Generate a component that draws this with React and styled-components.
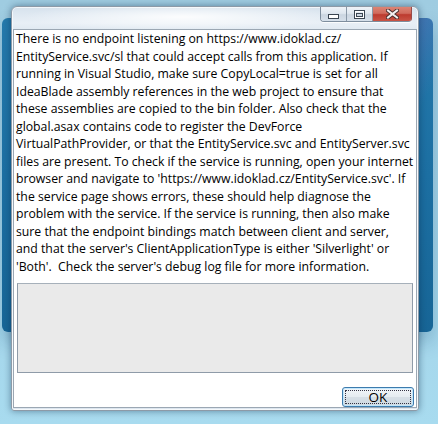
import React from "react";
import styled, { createGlobalStyle } from "styled-components";

const GlobalStyle = createGlobalStyle`
    body {
        margin: 0;
        overflow: hidden;
        font-family: "Open Sans", "Noto Sans", sans-serif;
    }
`;

const Desktop = styled.div`
    position: relative;
    width: 438px;
    height: 424px;
    box-sizing: border-box;
    padding: 6px 0 0 11px;
    background: linear-gradient(180deg, #9fcce1 0%, #a3d3e8 60%, #a8dbef 100%);
    overflow: hidden;
    &::before {
        content: "";
        position: absolute;
        left: 2px;
        top: 18px;
        width: 431px;
        height: 314px;
        border-radius: 6px;
        background:
            linear-gradient(118deg, transparent 62%, rgba(120, 110, 190, 0.35) 70%, transparent 78%),
            linear-gradient(180deg, #2479ab 0%, #1c6fa2 50%, #176596 100%);
        box-shadow: 0 10px 18px rgba(20, 70, 110, 0.25);
    }
`;

const Window = styled.div`
    position: relative;
    width: 408px;
    height: 405px;
    box-sizing: border-box;
    border: 1px solid #8d9aa7;
    border-radius: 6px 6px 3px 3px;
    background:
        radial-gradient(ellipse 160px 14px at 170px 10px, rgba(255, 255, 255, 0.9), transparent),
        linear-gradient(180deg, #d6e2ed 0px, #e8eff6 16px, #e0e9f1 23px, #dde6ef 100%);
    box-shadow: 0 0 7px rgba(0, 30, 60, 0.45), inset 0 0 0 1px rgba(255, 255, 255, 0.7);
    display: flex;
    flex-direction: column;
    padding: 0 1px 2px 1px;
`;

const TitleBar = styled.div`
    height: 22px;
    flex: none;
    display: flex;
    justify-content: flex-end;
    align-items: flex-start;
    padding-right: 5px;
`;

const CaptionGroup = styled.div`
    flex: none;
    display: flex;
    height: 14px;
    border-left: 1px solid #7e8e9e;
    border-right: 1px solid #9a4a48;
    border-bottom: 1px solid #7e8e9e;
    border-radius: 0 0 4px 4px;
    overflow: hidden;
    box-shadow: 0 1px 0 rgba(255, 255, 255, 0.8);
`;

const GlassButton = styled.div`
    flex: 0 0 25px;
    width: 25px;
    height: 14px;
    display: flex;
    align-items: center;
    justify-content: center;
    border-right: 1px solid #8a99a8;
    background-color: #dbe4ec;
    background-image: linear-gradient(180deg, #eef3f8 0%, #dfe7ef 45%, #cbd6e1 55%, #d6e0ea 100%);
`;

const CloseButton = styled.div`
    flex: 0 0 38px;
    width: 38px;
    height: 14px;
    display: flex;
    align-items: center;
    justify-content: center;
    background-color: #c4463a;
    background-image: linear-gradient(180deg, #dc8474 0%, #d06a5c 45%, #bd3b2f 55%, #c95446 100%);
`;

const Content = styled.div`
    flex: 1;
    background: #ffffff;
    border: 1px solid #9ba7b3;
    display: flex;
    flex-direction: column;
`;

const Message = styled.div`
    white-space: pre;
    font-size: 12.25px;
    line-height: 17.5px;
    color: #000000;
    padding: 0 0 0 2px;
    height: 245px;
`;

const DetailBox = styled.div`
    margin: 8px 3px 0 3px;
    height: 90px;
    box-sizing: border-box;
    border: 1px solid #8f9ba8;
    border-top-color: #a6b0ba;
    background: #eaeaea;
`;

const OkButton = styled.button`
    align-self: flex-end;
    margin: 14px 2px 0 0;
    width: 72px;
    height: 20px;
    box-sizing: border-box;
    border: 1px solid #3d7bad;
    border-radius: 3px;
    background: linear-gradient(180deg, #f2f6f9 0%, #e5ecf1 50%, #d6dfe6 51%, #cfd9e1 100%);
    box-shadow: inset 0 0 0 1px rgba(190, 230, 253, 0.9);
    font-family: "Open Sans", "Noto Sans", sans-serif;
    font-size: 13.5px;
    line-height: 18px;
    color: #000000;
    padding: 0;
    position: relative;
    &::after {
        content: "";
        position: absolute;
        inset: 2px;
        border: 1px dotted #334;
    }
`;

const MESSAGE = [
    "There is no endpoint listening on https://www.idoklad.cz/",
    "EntityService.svc/sl that could accept calls from this application. If",
    "running in Visual Studio, make sure CopyLocal=true is set for all",
    "IdeaBlade assembly references in the web project to ensure that",
    "these assemblies are copied to the bin folder. Also check that the",
    "global.asax contains code to register the DevForce",
    "VirtualPathProvider, or that the EntityService.svc and EntityServer.svc",
    "files are present. To check if the service is running, open your internet",
    "browser and navigate to 'https://www.idoklad.cz/EntityService.svc'. If",
    "the service page shows errors, these should help diagnose the",
    "problem with the service. If the service is running, then also make",
    "sure that the endpoint bindings match between client and server,",
    "and that the server's ClientApplicationType is either 'Silverlight' or",
    "'Both'.  Check the server's debug log file for more information.",
].join("\n");

const MinIcon = () => (
    <svg width="11" height="5" viewBox="0 0 11 5" style={{ marginTop: 5 }}>
        <rect x="0.5" y="0.5" width="10" height="4" fill="#ffffff" stroke="#3b4652" />
    </svg>
);

const MaxIcon = () => (
    <svg width="11" height="9" viewBox="0 0 11 9">
        <rect x="0.5" y="0.5" width="10" height="8" fill="none" stroke="#3b4652" />
        <rect x="1.5" y="1.5" width="8" height="6" fill="none" stroke="#ffffff" />
        <rect x="2.5" y="3.5" width="6" height="3" fill="none" stroke="#3b4652" />
    </svg>
);

const CloseIcon = () => (
    <svg width="13" height="10" viewBox="0 0 13 10">
        <path d="M2 1.5 L11 8.5 M11 1.5 L2 8.5" stroke="#4a3030" strokeWidth="4" strokeLinecap="square" />
        <path d="M2 1.5 L11 8.5 M11 1.5 L2 8.5" stroke="#f4f0f0" strokeWidth="2" strokeLinecap="square" />
    </svg>
);

export default () => {
    return (
        <>
            <GlobalStyle />
            <Desktop>
                <Window>
                    <TitleBar>
                        <CaptionGroup>
                            <GlassButton>
                                <MinIcon />
                            </GlassButton>
                            <GlassButton>
                                <MaxIcon />
                            </GlassButton>
                            <CloseButton>
                                <CloseIcon />
                            </CloseButton>
                        </CaptionGroup>
                    </TitleBar>
                    <Content>
                        <Message>{MESSAGE}</Message>
                        <DetailBox />
                        <OkButton>OK</OkButton>
                    </Content>
                </Window>
            </Desktop>
        </>
    );
};
